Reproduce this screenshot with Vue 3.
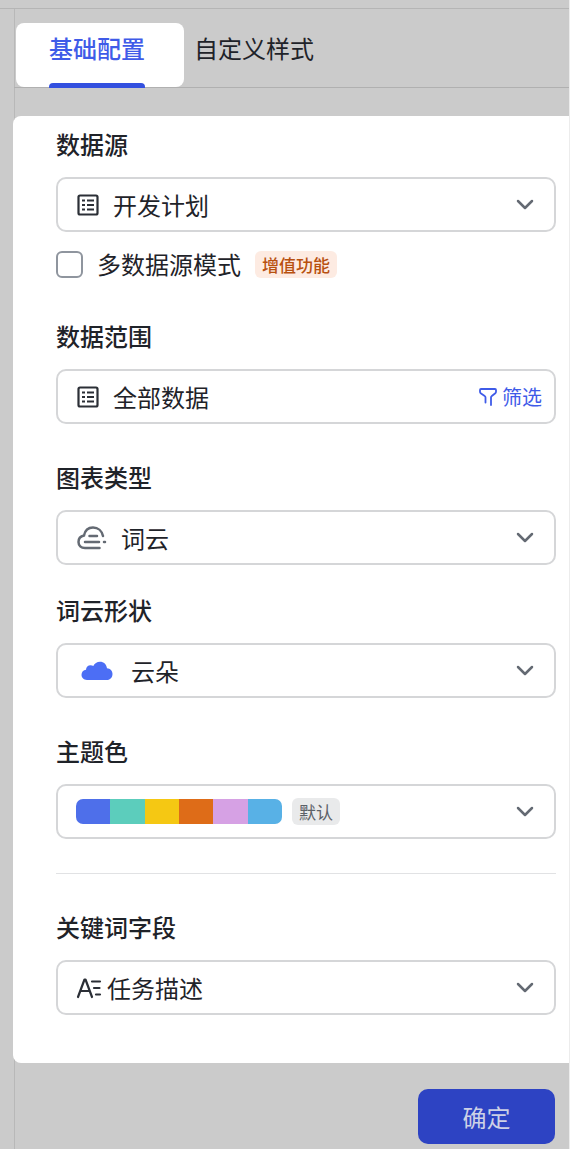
<script setup>
import { ref } from 'vue'

const activeTab = ref('basic')
const source = ref('开发计划')
const multiSource = ref(false)
const chartType = ref('词云')
const shape = ref('云朵')
const theme = ref('默认')
const keyword = ref('任务描述')

const palette = ['#4e6fea', '#5ccdbc', '#f5c813', '#de6c18', '#d6a1e4', '#58b1e6']
</script>

<template>
  <div class="page">
    <div class="config">
      <nav class="tabs">
        <button class="tab" :class="{ active: activeTab === 'basic' }" @click="activeTab = 'basic'">基础配置</button>
        <button class="tab" :class="{ active: activeTab === 'style' }" @click="activeTab = 'style'">自定义样式</button>
      </nav>

      <main class="panel">
        <section class="group">
          <label class="title" for="source">数据源</label>
          <div class="field">
            <svg class="icon-table" viewBox="0 0 22 22" fill="none" stroke="#2b2f36" stroke-width="2.2">
              <rect x="1.5" y="1.5" width="19" height="19" rx="1.5" />
              <path d="M5 6.500h3M10 6.500h7M5 11h3M10 11h7M5 15.500h3M10 15.500h7" />
            </svg>
            <select id="source" v-model="source">
              <option>开发计划</option>
            </select>
            <svg class="chevron" viewBox="0 0 18 12"><path d="M2 2l7 7 7-7" /></svg>
          </div>
          <div class="multi">
            <input id="multi" v-model="multiSource" type="checkbox">
            <label for="multi">多数据源模式</label>
            <span class="tag tag-paid">增值功能</span>
          </div>
        </section>

        <section class="group">
          <h3 class="title">数据范围</h3>
          <div class="field">
            <svg class="icon-table" viewBox="0 0 22 22" fill="none" stroke="#2b2f36" stroke-width="2.2">
              <rect x="1.5" y="1.5" width="19" height="19" rx="1.5" />
              <path d="M5 6.500h3M10 6.500h7M5 11h3M10 11h7M5 15.500h3M10 15.500h7" />
            </svg>
            <span class="value">全部数据</span>
            <button class="filter">
              <svg viewBox="0 0 18 18" fill="none" stroke="currentColor" stroke-width="1.8" stroke-linecap="round" stroke-linejoin="round">
                <path d="M6.500 14.500V9.500Q6.500 8.500 5.700 8L1.700 5.200Q1 4.700 1 3.800V2Q1 1 2 1H16Q17 1 17 2V3.800Q17 4.700 16.300 5.200L12.800 8Q12 8.500 12 9.500V17" />
              </svg>
              筛选
            </button>
          </div>
        </section>

        <section class="group tight">
          <label class="title" for="chart">图表类型</label>
          <div class="field">
            <svg class="icon-words" viewBox="0 0 30 24" fill="none" stroke="#646a73" stroke-width="2.5" stroke-linecap="round">
              <path d="M22.500 22H8C4 22 1.500 19.500 1.500 16C1.500 12.500 3.500 10.200 7 9.500C8 4.500 11.500 1.500 16 1.500C21 1.500 25 5 26 10" />
              <path d="M12.500 10H20M8 16H22M27 16h1" />
            </svg>
            <select id="chart" v-model="chartType">
              <option>词云</option>
            </select>
            <svg class="chevron" viewBox="0 0 18 12"><path d="M2 2l7 7 7-7" /></svg>
          </div>
        </section>

        <section class="group">
          <label class="title" for="shape">词云形状</label>
          <div class="field">
            <svg class="icon-cloud" viewBox="0 0 32 20" fill="#4c6ef5">
              <path d="M6 19C2.500 19 .500 16.500 .500 13.800C.500 11 2.300 9 5 8.700C5 6 7 4.200 9.500 4.200C10.700 4.200 11.500 4.500 12.300 5.100C13.500 2.300 16 .700 19 .700C22.800 .700 25.500 3.400 26 7.300C29.200 7.600 31.500 9.700 31.500 13C31.500 16.500 29 19 26 19Z" />
            </svg>
            <select id="shape" v-model="shape">
              <option>云朵</option>
            </select>
            <svg class="chevron" viewBox="0 0 18 12"><path d="M2 2l7 7 7-7" /></svg>
          </div>
        </section>

        <section class="group">
          <label class="title" for="theme">主题色</label>
          <div class="field">
            <div class="palette">
              <i v-for="color in palette" :key="color" :style="{ background: color }"></i>
            </div>
            <span class="tag tag-default">{{ theme }}</span>
            <select id="theme" v-model="theme" class="cover">
              <option>默认</option>
            </select>
            <svg class="chevron" viewBox="0 0 18 12"><path d="M2 2l7 7 7-7" /></svg>
          </div>
        </section>

        <hr>

        <section class="group">
          <label class="title" for="keyword">关键词字段</label>
          <div class="field">
            <svg class="icon-text" viewBox="0 0 26 22" fill="none" stroke="#2b2f36" stroke-width="2.2" stroke-linecap="round" stroke-linejoin="round">
              <path d="M2 20L8.500 2.500H9.500L16 20M4.500 14H13" />
              <path d="M16 4.500h8M18 11h5.500M20 17.500h4" />
            </svg>
            <select id="keyword" v-model="keyword">
              <option>任务描述</option>
            </select>
            <svg class="chevron" viewBox="0 0 18 12"><path d="M2 2l7 7 7-7" /></svg>
          </div>
        </section>
      </main>

      <footer class="footer">
        <button class="confirm">确定</button>
      </footer>
    </div>
  </div>
</template>

<style>
body {
  margin: 0;
  background: #cbcbcb;
}
</style>

<style scoped>
.page {
  box-sizing: border-box;
  min-height: 100vh;
  display: flex;
  flex-direction: column;
  padding-top: 8px;
  border-right: 1px solid #ececec;
  background: #cbcbcb;
  color: #1f2329;
  font-family: "Noto Sans CJK SC", sans-serif;
  font-size: 24px;
  line-height: 34px;
}

.config {
  flex: 1;
  padding-left: 14px;
  border-top: 1px solid #b5b5b5;
  background: linear-gradient(#b8b8b8, #b8b8b8) 14px 0 / 1px 100% no-repeat;
}

button,
select {
  margin: 0;
  padding: 0;
  border: none;
  background: none;
  color: inherit;
  font: inherit;
  cursor: pointer;
}

.tabs {
  display: flex;
  align-items: flex-start;
  padding: 14px 0 0 2px;
  border-bottom: 1px solid #b0b0b0;
}

.tab {
  position: relative;
  height: 64px;
  padding: 0 10px 14px;
}

.tab.active {
  padding: 0 39px 14px 33px;
  border-radius: 8px;
  background: #fff;
  color: #3f5be8;
  font-weight: 500;
}

.tab.active::after {
  content: "";
  position: absolute;
  left: 33px;
  right: 39px;
  bottom: -1px;
  height: 5px;
  border-radius: 4px 4px 0 0;
  background: #3350df;
}

.panel {
  margin: 28px 0 0 -1px;
  padding: 11px 13px 48px 43px;
  border-radius: 8px 0 0 8px;
  background: #fff;
}

.group + .group {
  margin-top: 36px;
}

.group.tight + .group {
  margin-top: 28px;
}

.title {
  display: block;
  margin: 0 0 16px;
  font-size: 24px;
  font-weight: 500;
}

.field {
  position: relative;
  box-sizing: border-box;
  display: flex;
  align-items: center;
  height: 55px;
  padding: 0 20px 0 18px;
  border: 2px solid #d5d6d8;
  border-radius: 10px;
}

.field svg {
  flex: none;
}

.field select,
.value {
  flex: 1;
  min-width: 0;
  appearance: none;
  text-align: left;
}

.field .cover {
  position: absolute;
  inset: 0;
  width: 100%;
  opacity: 0;
}

.chevron {
  width: 18px;
  height: 12px;
  margin-left: auto;
  fill: none;
  stroke: #646a73;
  stroke-width: 2.5;
  stroke-linecap: round;
  stroke-linejoin: round;
  pointer-events: none;
}

.icon-table {
  width: 22px;
  height: 22px;
  margin: 0 14px 0 1px;
}

.icon-words {
  width: 30px;
  height: 24px;
  margin: 0 14px 0 1px;
}

.icon-cloud {
  width: 32px;
  height: 20px;
  margin: 0 18px 0 5px;
}

.icon-text {
  width: 26px;
  height: 22px;
  margin-right: 5px;
}

.multi {
  display: flex;
  align-items: center;
  margin: 15px 0 38px;
}

.multi input {
  appearance: none;
  box-sizing: border-box;
  width: 27px;
  height: 27px;
  margin: 0 14px 0 0;
  border: 2px solid #8f959e;
  border-radius: 6px;
  background: #fff;
}

.multi input:checked {
  border-color: #3f5be8;
  background: #3f5be8;
}

.tag {
  padding: 0 7px;
  border-radius: 6px;
  font-size: 17px;
  line-height: 27px;
}

.tag-paid {
  margin-left: 14px;
  background: #fdebe2;
  color: #b8500f;
  font-weight: 500;
}

.tag-default {
  margin-left: 10px;
  background: #e9eaeb;
  color: #5c6168;
}

.filter {
  display: flex;
  align-items: center;
  gap: 5px;
  margin-right: -8px;
  color: #3f5be8;
  font-size: 20px;
}

.filter svg {
  width: 18px;
  height: 18px;
}

.palette {
  display: flex;
  width: 206px;
  height: 25px;
  overflow: hidden;
  border-radius: 7px;
}

.palette i {
  flex: 1;
}

hr {
  height: 1px;
  margin: 34px 0 36px;
  border: none;
  background: #e1e2e4;
}

.footer {
  display: flex;
  justify-content: flex-end;
  padding: 26px 14px 4px;
}

.confirm {
  width: 137px;
  height: 55px;
  border-radius: 10px;
  background: #2d43c3;
  color: #cdd1e6;
}
</style>
